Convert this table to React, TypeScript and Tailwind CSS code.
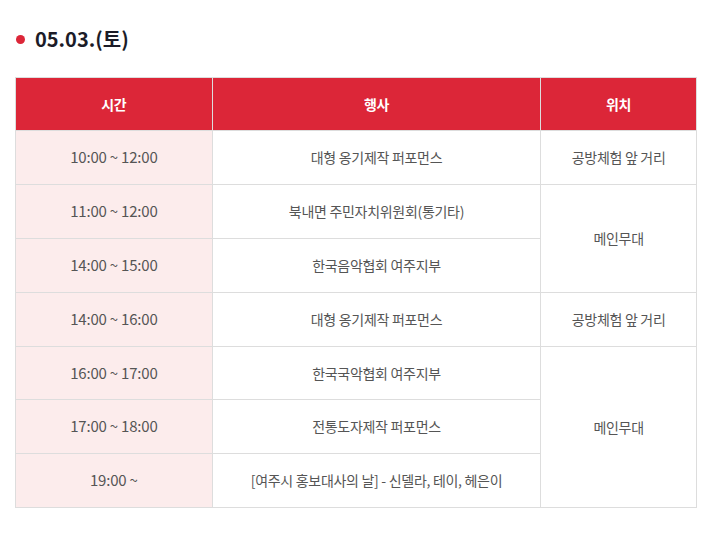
import React from "react";

const rows: { time: string; event: string; place?: string; span?: number; h: string }[] = [
  { time: "10:00 ~ 12:00", event: "대형 옹기제작 퍼포먼스", place: "공방체험 앞 거리", span: 1, h: "h-[54px]" },
  { time: "11:00 ~ 12:00", event: "북내면 주민자치위원회(통기타)", place: "메인무대", span: 2, h: "h-[54px]" },
  { time: "14:00 ~ 15:00", event: "한국음악협회 여주지부", h: "h-[54px]" },
  { time: "14:00 ~ 16:00", event: "대형 옹기제작 퍼포먼스", place: "공방체험 앞 거리", span: 1, h: "h-[54px]" },
  { time: "16:00 ~ 17:00", event: "한국국악협회 여주지부", place: "메인무대", span: 3, h: "h-[53px]" },
  { time: "17:00 ~ 18:00", event: "전통도자제작 퍼포먼스", h: "h-[54px]" },
  { time: "19:00 ~", event: "[여주시 홍보대사의 날] - 신델라, 테이, 헤은이", h: "h-[54px]" },
];

export default function App() {
  return (
    <div
      className="w-[716px] h-[540px] bg-white"
      style={{ fontFamily: '"Noto Sans CJK KR", "Noto Sans", sans-serif' }}
    >
      <div className="flex items-center pl-[16px] pt-[28px] h-[50px]">
        <span className="w-[9px] h-[9px] rounded-full bg-[#dc2638] mr-[10px]" />
        <span className="text-[20px] font-bold text-[#1c1c28] tracking-[0px] leading-none">05.03.(토)</span>
      </div>
      <div className="pl-[15px] pt-[27px]">
        <table className="w-[682px] border-collapse text-[14px] tracking-[-0.3px]">
          <colgroup>
            <col className="w-[197px]" />
            <col className="w-[329px]" />
            <col className="w-[156px]" />
          </colgroup>
          <thead>
            <tr className="h-[53px] bg-[#dc2638] text-white font-bold">
              <th className="border border-[#dddddd] font-bold">시간</th>
              <th className="border border-[#dddddd] font-bold">행사</th>
              <th className="border border-[#dddddd] font-bold">위치</th>
            </tr>
          </thead>
          <tbody>
            {rows.map((r, i) => (
              <tr key={i} className={r.h}>
                <td className="border border-[#dddddd] bg-[#fcecec] text-center text-[#555555] text-[15px] font-normal tracking-[-0.2px]">{r.time}</td>
                <td className="border border-[#dddddd] text-center text-[#555555]">{r.event}</td>
                {r.place && (
                  <td rowSpan={r.span} className="border border-[#dddddd] text-center text-[#555555]">
                    {r.place}
                  </td>
                )}
              </tr>
            ))}
          </tbody>
        </table>
      </div>
    </div>
  );
}
